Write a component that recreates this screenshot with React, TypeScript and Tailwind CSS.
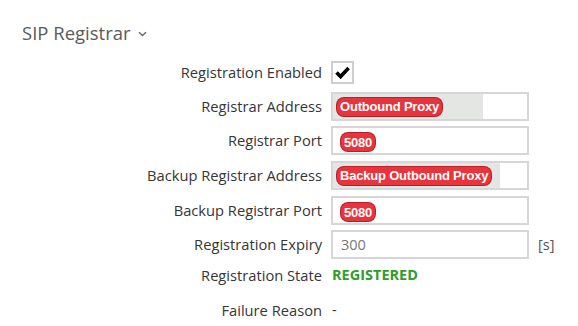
import React from "react";

function Badge({ text }: { text: string }) {
  return (
    <span className="inline-flex items-center h-[18px] px-[3px] rounded-[7px] bg-[#e8343c] text-white font-bold text-[13px] leading-none tracking-[-0.2px] shadow-[0_0_0_1px_#b81f27] [font-family:'Liberation_Sans',Arial,sans-serif]">
      {text}
    </span>
  );
}

function Label({ children }: { children: React.ReactNode }) {
  return (
    <div className="w-[322px] shrink-0 text-right text-[14.7px] text-[#363636]">{children}</div>
  );
}

function Field({ children, grayTo }: { children?: React.ReactNode; grayTo?: number }) {
  return (
    <div className="w-[198px] h-[29px] border-2 border-[#d6d6d6] bg-white flex items-center relative">
      {grayTo ? (
        <div
          className="absolute left-0 top-0 bottom-0 bg-[#e4e6e4]"
          style={{ width: grayTo }}
        />
      ) : null}
      <div className="relative pl-[4px] flex items-center">{children}</div>
    </div>
  );
}

export default function App() {
  return (
    <div className="w-[578px] h-[326px] bg-white overflow-hidden [font-family:'Open_Sans','Noto_Sans',sans-serif]">
      <div className="pt-[20px] pl-[22px] flex items-center gap-[7px] text-[#5a5a5a] text-[18.5px] leading-[26px]">
        <span>SIP Registrar</span>
        <svg width="9" height="6" viewBox="0 0 9 6" className="mt-[2px]">
          <path d="M1 1.2 L4.5 4.5 L8 1.2" fill="none" stroke="#666" strokeWidth="1.4" />
        </svg>
      </div>

      <div className="mt-[15px] flex flex-col">
        <div className="flex items-center h-[23px]">
          <Label>Registration Enabled</Label>
          <div className="ml-[9px] w-[23px] h-[23px] border-2 border-[#cfcfcf] bg-white flex items-center justify-center">
            <svg width="15" height="13" viewBox="0 0 15 13">
              <path d="M1.5 6.5 L5.6 10.6 L13.6 2" fill="none" stroke="#000" strokeWidth="3.6" />
            </svg>
          </div>
        </div>

        <div className="flex items-center mt-[8px]">
          <Label>Registrar Address</Label>
          <div className="ml-[9px]">
            <Field grayTo={150}>
              <Badge text="Outbound Proxy" />
            </Field>
          </div>
        </div>

        <div className="flex items-center mt-[5px]">
          <Label>Registrar Port</Label>
          <div className="ml-[9px]">
            <Field>
              <span className="ml-[4px]">
                <Badge text="5080" />
              </span>
            </Field>
          </div>
        </div>

        <div className="flex items-center mt-[6px]">
          <Label>Backup Registrar Address</Label>
          <div className="ml-[9px]">
            <Field grayTo={167}>
              <Badge text="Backup Outbound Proxy" />
            </Field>
          </div>
        </div>

        <div className="flex items-center mt-[6px]">
          <Label>Backup Registrar Port</Label>
          <div className="ml-[9px]">
            <Field>
              <span className="ml-[4px]">
                <Badge text="5080" />
              </span>
            </Field>
          </div>
        </div>

        <div className="flex items-center mt-[5px]">
          <Label>Registration Expiry</Label>
          <div className="ml-[9px] flex items-center">
            <Field>
              <span className="pl-[4px] text-[14.5px] text-[#777]">300</span>
            </Field>
            <span className="ml-[9px] text-[14.5px] text-[#555]">[s]</span>
          </div>
        </div>

        <div className="flex items-center mt-[6px] h-[20px]">
          <Label>Registration State</Label>
          <span className="ml-[10px] text-[14.5px] font-bold text-[#2e9e2e]">REGISTERED</span>
        </div>

        <div className="flex items-center mt-[15px] h-[20px]">
          <Label>Failure Reason</Label>
          <span className="ml-[10px] text-[14.5px] text-[#333]">-</span>
        </div>
      </div>
    </div>
  );
}
